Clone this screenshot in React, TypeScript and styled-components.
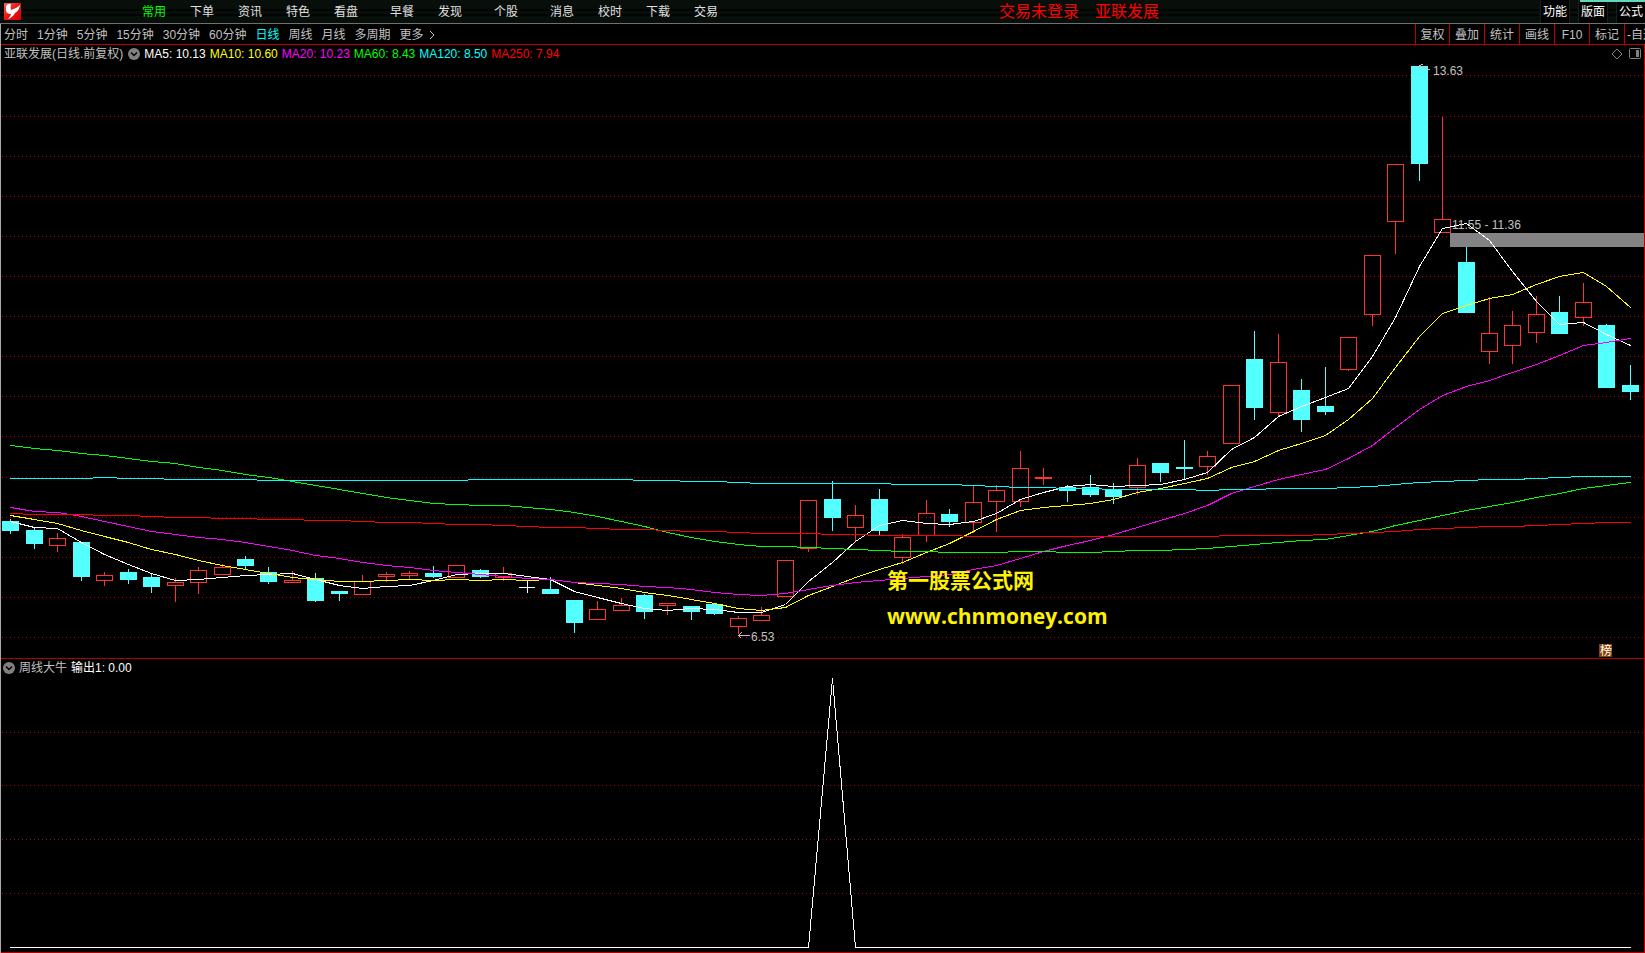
import React from "react";
import styled, { createGlobalStyle } from "styled-components";

const sans = `"Liberation Sans", "Noto Sans CJK SC", sans-serif`;

const GlobalStyle = createGlobalStyle`
  * { box-sizing: border-box; }
  body { margin: 0; background: #000; font-family: ${sans}; font-size: 12px; }
  button { font-family: inherit; }
`;

/* ---------- data ---------- */

type Kind = "up" | "down" | "flat";
type Candle = [Kind, number, number, number, number];

/* kind, high, body top, body bottom, low */
const candles: Candle[] = [
  ["down", 519, 521, 531, 534], ["down", 527, 530, 544, 549], ["up", 533, 538, 546, 552],
  ["down", 542, 542, 577, 581], ["up", 572, 575, 581, 586], ["down", 569, 572, 580, 584],
  ["down", 573, 577, 587, 593], ["up", 578, 582, 586, 602], ["up", 567, 570, 583, 594],
  ["up", 564, 567, 575, 575], ["down", 556, 559, 566, 569], ["down", 567, 572, 582, 584],
  ["up", 571, 580, 583, 583], ["down", 573, 578, 601, 602], ["down", 591, 591, 594, 601],
  ["up", 575, 581, 595, 595], ["up", 572, 574, 577, 582], ["up", 571, 573, 576, 579],
  ["down", 566, 573, 577, 578], ["up", 565, 565, 578, 578], ["down", 569, 570, 577, 578],
  ["up", 567, 573, 578, 581], ["flat", 581, 587, 588, 593], ["down", 577, 589, 594, 594],
  ["down", 600, 600, 623, 633], ["up", 601, 609, 620, 620], ["up", 598, 605, 611, 611],
  ["down", 594, 595, 612, 619], ["up", 603, 603, 606, 615], ["down", 606, 606, 612, 620],
  ["down", 603, 604, 614, 615], ["up", 616, 618, 627, 634], ["up", 607, 615, 621, 621],
  ["up", 560, 560, 597, 597], ["up", 500, 500, 549, 552], ["down", 481, 499, 518, 531],
  ["up", 505, 515, 528, 541], ["down", 489, 499, 531, 535], ["up", 534, 537, 558, 564],
  ["up", 500, 513, 536, 542], ["down", 509, 514, 522, 527], ["up", 486, 502, 523, 533],
  ["up", 485, 490, 502, 532], ["up", 451, 468, 502, 507], ["up", 468, 477, 479, 485],
  ["down", 485, 487, 491, 502], ["down", 475, 487, 495, 497], ["down", 483, 490, 497, 504],
  ["up", 458, 465, 488, 495], ["down", 463, 463, 473, 482], ["down", 440, 467, 469, 479],
  ["up", 451, 456, 467, 475], ["up", 385, 385, 444, 444], ["down", 331, 359, 408, 420],
  ["up", 334, 362, 413, 416], ["down", 379, 390, 420, 432], ["down", 367, 406, 412, 415],
  ["up", 337, 337, 370, 371], ["up", 255, 255, 315, 326], ["up", 164, 164, 222, 254],
  ["down", 66, 66, 164, 181], ["up", 117, 219, 233, 233], ["down", 247, 262, 313, 313],
  ["up", 297, 333, 352, 364], ["up", 311, 325, 346, 364], ["up", 296, 314, 333, 343],
  ["down", 296, 312, 334, 334], ["up", 283, 302, 318, 326], ["down", 324, 325, 388, 388],
  ["down", 365, 385, 392, 400],
];

const ma5 = [
  521, 527, 528, 542, 554, 564, 573, 580, 579, 577, 575, 574, 573, 579, 585, 588, 586, 585, 580, 574,
  573, 573, 576, 579, 591, 597, 603, 608, 610, 608, 609, 612, 612, 604, 581, 562, 541, 525, 520, 523,
  524, 521, 513, 499, 492, 486, 484, 486, 485, 484, 479, 472, 449, 437, 416, 406, 397, 388, 356, 317,
  266, 228, 223, 240, 271, 301, 324, 322, 334, 345,
];
const ma10 = [
  515, 519, 523, 530, 536, 542, 549, 554, 560, 565, 569, 573, 577, 579, 581, 581, 580, 579, 580, 579,
  580, 579, 580, 579, 582, 585, 588, 592, 595, 599, 603, 608, 610, 607, 595, 586, 577, 569, 562, 552,
  543, 531, 519, 510, 507, 505, 503, 499, 492, 488, 483, 478, 467, 461, 450, 443, 435, 419, 398, 367,
  336, 313, 305, 298, 294, 284, 276, 272, 286, 307,
];
const ma20 = [
  507, 511, 512, 516, 521, 526, 531, 534, 537, 539, 542, 546, 550, 555, 558, 562, 565, 567, 570, 572,
  574, 576, 578, 579, 582, 583, 584, 586, 587, 589, 592, 594, 595, 593, 589, 585, 582, 580, 578, 576,
  574, 569, 565, 558, 551, 545, 540, 534, 527, 520, 513, 505, 493, 486, 479, 474, 469, 458, 445, 427,
  409, 395, 386, 380, 372, 364, 355, 345, 342, 338,
];
const ma60 = [
  445, 448, 450, 453, 455, 458, 461, 463, 467, 470, 474, 477, 481, 485, 489, 493, 497, 500, 503, 504,
  505, 505, 507, 509, 512, 516, 521, 526, 532, 537, 541, 544, 546, 546, 547, 548, 549, 550, 551, 551,
  552, 552, 552, 551, 551, 552, 552, 551, 550, 550, 549, 548, 546, 544, 542, 540, 539, 535, 531, 525,
  520, 515, 510, 506, 502, 497, 493, 488, 485, 482,
];
const ma120 = [
  478, 478, 478, 478, 477, 478, 478, 479, 479, 479, 479, 480, 480, 480, 480, 480, 480, 480, 480, 480,
  479, 479, 479, 479, 479, 479, 479, 480, 480, 481, 481, 482, 483, 483, 483, 483, 483, 483, 484, 484,
  484, 485, 486, 487, 487, 488, 488, 489, 489, 489, 489, 490, 489, 489, 488, 488, 488, 487, 486, 484,
  482, 481, 480, 479, 479, 478, 477, 476, 476, 476,
];
const ma250 = [
  513, 514, 514, 514, 515, 515, 516, 517, 517, 518, 518, 519, 519, 520, 520, 521, 522, 522, 523, 524,
  524, 525, 526, 527, 527, 528, 529, 529, 530, 531, 531, 532, 533, 533, 533, 534, 534, 535, 535, 535,
  535, 536, 536, 536, 536, 536, 536, 536, 536, 536, 536, 536, 535, 535, 535, 535, 534, 533, 532, 531,
  529, 528, 527, 526, 526, 525, 524, 523, 522, 522,
];

const averages = [
  { name: "MA5", value: "10.13", color: "#ffffff", points: ma5 },
  { name: "MA10", value: "10.60", color: "#ffff00", points: ma10 },
  { name: "MA20", value: "10.23", color: "#ff00ff", points: ma20 },
  { name: "MA60", value: "8.43", color: "#00ff00", points: ma60 },
  { name: "MA120", value: "8.50", color: "#00ffff", points: ma120 },
  { name: "MA250", value: "7.94", color: "#ff0000", points: ma250 },
];

const menuGroups = [
  ["常用", "下单", "资讯", "特色", "看盘"],
  ["早餐", "发现"],
  ["个股"],
  ["消息", "校时", "下载", "交易"],
];
const periods = ["分时", "1分钟", "5分钟", "15分钟", "30分钟", "60分钟", "日线", "周线", "月线", "多周期"];
const tools = ["复权", "叠加", "统计", "画线", "F10", "标记", "-自选"];
const priceGrid = [75, 116, 156, 196, 236, 276, 316, 356, 396, 436, 477, 517, 557, 597, 637];
const signalGrid = [732, 785, 839, 893];

const barX = (i: number) => Math.floor(10.82 + 23.4707 * i);

/* ---------- layout ---------- */

const Page = styled.div`
  min-height: 100vh;
  display: flex;
  flex-direction: column;
  overflow: hidden;
  background: #000;
  color: #c0c0c0;
  line-height: 18px;
`;

const Header = styled.header`
  height: 24px;
  display: flex;
  align-items: center;
  padding-left: 4px;
  background: linear-gradient(#080e0a 0 9px, #020403 9px 11px, #080e0a 11px 14px, #020403 14px 16px, #080e0a 16px);
  border-bottom: 1px solid #6b7370;
`;

const Logo = styled.svg`
  width: 17px;
  height: 17px;
  flex: none;
`;

const Menu = styled.nav`
  display: flex;
  gap: 8px;
  margin-left: 109px;
`;

const MenuGroup = styled.div`
  display: flex;
`;

const PlainButton = styled.button`
  border: 0;
  margin: 0;
  padding: 0;
  background: none;
  color: inherit;
  font-size: 12px;
  line-height: 18px;
  white-space: nowrap;
`;

const MenuButton = styled(PlainButton)<{ $active?: boolean }>`
  width: 48px;
  color: ${(p) => (p.$active ? "#00ff00" : "#e0e0e0")};
`;

const Status = styled.div`
  display: flex;
  gap: 16px;
  margin-left: 269px;
  color: #ff0000;
  font-size: 16px;
  line-height: 22px;
  white-space: nowrap;
`;

const ViewTabs = styled.div`
  position: relative;
  display: flex;
  gap: 8px;
  margin-left: auto;
  align-self: stretch;

  &::after {
    content: "";
    position: absolute;
    top: 0;
    left: 40px;
    right: 0;
    height: 2px;
    background: #5fd8bb;
  }
`;

const ViewTab = styled(PlainButton)`
  width: 30px;
  background: #000;
  border: solid #1a1f1c;
  border-width: 0 1px;
  color: #fff;

  &:last-child {
    width: 29px;
    border-right: 0;
  }
`;

const Frame = styled.main`
  flex: 1;
  display: flex;
  flex-direction: column;
  border-left: 1px solid #a8a8a8;
`;

const Toolbar = styled.div`
  height: 21px;
  display: flex;
  justify-content: space-between;
  border-bottom: 1px solid #c00000;
`;

const Periods = styled.div`
  display: flex;
  align-items: center;
  gap: 9px;
  padding: 1px 0 0 3px;
`;

const PeriodButton = styled(PlainButton)<{ $active?: boolean }>`
  display: flex;
  align-items: center;
  gap: 5px;
  color: ${(p) => (p.$active ? "#00ffff" : "#c0c0c0")};
`;

const Tools = styled.div`
  display: flex;
`;

const ToolButton = styled(PlainButton)`
  width: 35px;
  padding-top: 1px;
  border-left: 1px solid #c00000;
  color: #c0c0c0;
  overflow: hidden;

  &:first-child {
    width: 34px;
  }

  &:last-child {
    width: 21px;
    padding-left: 2px;
    text-align: left;
  }
`;

const Panel = styled.section`
  border-right: 1px solid #c00000;
  border-bottom: 1px solid #b00000;
`;

const Legend = styled.div`
  height: 18px;
  display: flex;
  align-items: center;
  gap: 4px;
  padding: 0 2px;
  white-space: nowrap;
`;

const Title = styled.span`
  padding: 0 1px;
`;

const LegendItem = styled.span<{ $color: string }>`
  color: ${(p) => p.$color};
`;

const Corner = styled.div`
  display: flex;
  gap: 6px;
  margin: 0 1px 0 auto;
`;

const IconButton = styled(PlainButton)`
  display: flex;
`;

const Chart = styled.svg`
  display: block;
  width: 100%;
  height: auto;
  shape-rendering: crispEdges;
`;

const ChartLabel = styled.text<{ $color?: string }>`
  font-family: ${sans};
  font-size: 12px;
  fill: ${(p) => p.$color ?? "#c0c0c0"};
`;

const Watermark = styled.text`
  font-family: "Open Sans", "Noto Sans CJK SC", sans-serif;
  font-size: 21px;
  font-weight: 700;
  fill: #fff200;
`;

/* ---------- parts ---------- */

const Chevron = () => (
  <svg width="12" height="12" viewBox="0 0 12 12">
    <circle cx="6" cy="6" r="6" fill="#808080" />
    <path d="M3 4.5 6 7.5 9 4.5" fill="none" stroke="#000" strokeWidth="1.5" />
  </svg>
);

const Grid = ({ rows }: { rows: number[] }) => (
  <>
    {rows.map((y) => (
      <line key={y} x1="2" x2="1644" y1={y + 0.5} y2={y + 0.5} stroke="#b00000" strokeDasharray="1 3" />
    ))}
  </>
);

const CandleMark = ({ candle, x }: { candle: Candle; x: number }) => {
  const [kind, high, top, bottom, low] = candle;
  if (kind === "flat") {
    return (
      <g fill="#fff">
        <rect x={x - 8} y={top} width="16" height="1" />
        <rect x={x} y={high} width="1" height={low - high} />
      </g>
    );
  }
  const color = kind === "up" ? "#ff3232" : "#54ffff";
  return (
    <g fill={color}>
      <rect x={x} y={high} width="1" height={top - high} />
      <rect x={x} y={bottom} width="1" height={low - bottom} />
      {kind === "down" || bottom - top < 3 ? (
        <rect x={x - 8} y={top} width="17" height={bottom - top} />
      ) : (
        <rect x={x - 7.5} y={top + 0.5} width="16" height={bottom - top - 1} fill="none" stroke={color} />
      )}
    </g>
  );
};

const linePoints = (ys: number[]) => ys.map((y, i) => `${barX(i) + 0.5},${y + 0.5}`).join(" ");

const signal = candles.map((_, i) => (i === 35 ? 678 : 947));

export default function App() {
  return (
    <Page>
      <GlobalStyle />
      <Header>
        <Logo viewBox="0 0 17 17" role="img" aria-label="logo">
          <defs>
            <linearGradient id="logoFill" x1="0" y1="0" x2="1" y2="1">
              <stop offset="0" stopColor="#f06060" />
              <stop offset="0.5" stopColor="#e81414" />
              <stop offset="1" stopColor="#d80000" />
            </linearGradient>
          </defs>
          <rect width="17" height="17" fill="url(#logoFill)" />
          <path d="M2 3Q4 0 7 1Q6 4 7 7Q12 6 16 2Q15 8 11 10Q9 14 4 16Q7 13 7 11Q2 11 2 7Z" fill="#fff" />
        </Logo>
        <Menu>
          {menuGroups.map((group) => (
            <MenuGroup key={group[0]}>
              {group.map((label) => (
                <MenuButton key={label} $active={label === "常用"}>{label}</MenuButton>
              ))}
            </MenuGroup>
          ))}
        </Menu>
        <Status>
          <span>交易未登录</span>
          <span>亚联发展</span>
        </Status>
        <ViewTabs>
          <ViewTab>功能</ViewTab>
          <ViewTab>版面</ViewTab>
          <ViewTab>公式</ViewTab>
        </ViewTabs>
      </Header>
      <Frame>
        <Toolbar>
          <Periods>
            {periods.map((label) => (
              <PeriodButton key={label} $active={label === "日线"}>{label}</PeriodButton>
            ))}
            <PeriodButton>
              更多
              <svg width="6" height="10" viewBox="0 0 6 10">
                <path d="M1 1 5 5 1 9" fill="none" stroke="#c0c0c0" />
              </svg>
            </PeriodButton>
          </Periods>
          <Tools>
            {tools.map((label) => (
              <ToolButton key={label}>{label}</ToolButton>
            ))}
          </Tools>
        </Toolbar>

        <Panel>
          <Legend>
            <Title>亚联发展(日线.前复权)</Title>
            <IconButton aria-label="指标菜单"><Chevron /></IconButton>
            {averages.map((a) => (
              <LegendItem key={a.name} $color={a.color}>{a.name}: {a.value}</LegendItem>
            ))}
            <Corner>
              <IconButton aria-label="标记">
                <svg width="12" height="12" viewBox="0 0 12 12">
                  <path d="M6 1 11 6 6 11 1 6Z" fill="none" stroke="#808080" />
                </svg>
              </IconButton>
              <IconButton aria-label="侧栏">
                <svg width="12" height="12" viewBox="0 0 12 12">
                  <rect x="0.5" y="0.5" width="11" height="10" rx="1" fill="none" stroke="#808080" />
                  <rect x="7" y="2" width="3" height="7" fill="#808080" />
                </svg>
              </IconButton>
            </Corner>
          </Legend>
          <Chart viewBox="1 63 1643 595" role="img" aria-label="日线">
            <Grid rows={priceGrid} />
            <rect x="1450" y="233" width="194" height="14" fill="#848284" />
            {candles.map((c, i) => (
              <CandleMark key={i} candle={c} x={barX(i)} />
            ))}
            {averages.map((a) => (
              <polyline key={a.name} points={linePoints(a.points)} fill="none" stroke={a.color} strokeLinecap="square" />
            ))}
            <path d="M1430 69.5 1420 66.5M1419.5 69 1419.5 65.5 1423 64.5" fill="none" stroke="#c0c0c0" />
            <ChartLabel x="1433" y="75">13.63</ChartLabel>
            <ChartLabel x="1452" y="229">11.55 - 11.36</ChartLabel>
            <path d="M750 635.5H738M741.5 632.5 738.5 635.5 741.5 638.5" fill="none" stroke="#c0c0c0" />
            <ChartLabel x="751" y="641">6.53</ChartLabel>
            <Watermark x="887" y="588">第一股票公式网</Watermark>
            <Watermark x="887" y="624">www.chnmoney.com</Watermark>
            <rect x="1599" y="644" width="13" height="13" fill="#8a4200" />
            <ChartLabel x="1600" y="655" $color="#fff">榜</ChartLabel>
          </Chart>
        </Panel>

        <Panel>
          <Legend>
            <IconButton aria-label="指标菜单"><Chevron /></IconButton>
            <span>周线大牛</span>
            <LegendItem $color="#ffffff">输出1: 0.00</LegendItem>
          </Legend>
          <Chart viewBox="1 677 1643 275" role="img" aria-label="周线大牛">
            <Grid rows={signalGrid} />
            <polyline points={linePoints(signal)} fill="none" stroke="#fff" strokeLinecap="square" />
          </Chart>
        </Panel>
      </Frame>
    </Page>
  );
}
